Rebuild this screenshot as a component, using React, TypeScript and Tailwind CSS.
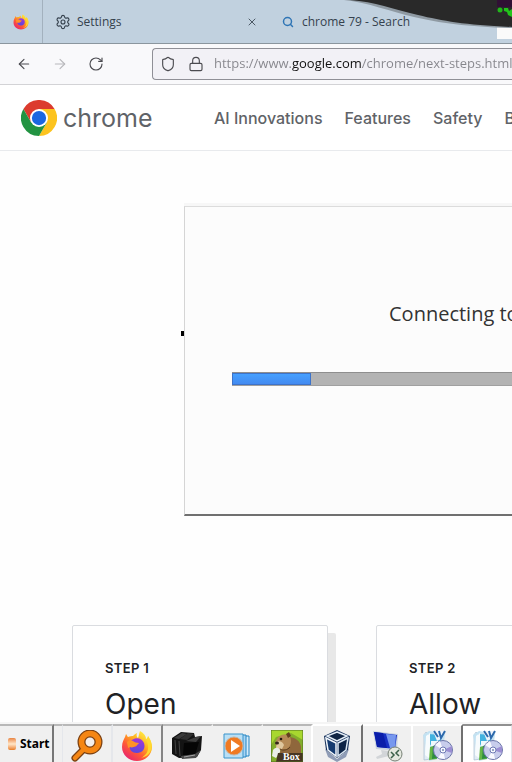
import type { ReactNode } from "react";
import { ArrowLeft, ArrowRight, Lock, RotateCw, Search, Settings, Shield, X } from "lucide-react";

const NAV_LINKS = ["AI Innovations", "Features", "Safety", "B"];

const STEPS = [
  { label: "STEP 1", title: "Open" },
  { label: "STEP 2", title: "Allow" },
];

function FirefoxIcon({ className }: { className: string }) {
  return (
    <svg viewBox="0 0 32 32" className={className} aria-hidden="true">
      <defs>
        <linearGradient id="fox" x1="0.85" y1="0.1" x2="0.2" y2="0.95">
          <stop offset="0" stopColor="#fff14a" />
          <stop offset="0.35" stopColor="#ffb01f" />
          <stop offset="0.65" stopColor="#ff5a36" />
          <stop offset="1" stopColor="#e8256f" />
        </linearGradient>
        <linearGradient id="globe" x1="0.6" y1="0" x2="0.4" y2="1">
          <stop offset="0" stopColor="#a436d8" />
          <stop offset="1" stopColor="#5948dd" />
        </linearGradient>
      </defs>
      <path
        d="M19 1c4 2 6 5 6 8 1 0 2-2 2-3 3 4 4 8 4 11 0 8-7 14-15 14S1 25 1 17c0-5 2-8 3-10l1-3c1 1 1 2 2 3 2-1 4-1 5-1 1-1 2-2 4-3-1 3 0 4 1 5 1-2 1-5 2-7Z"
        fill="url(#fox)"
      />
      <path d="M20 3c4 3 6 7 7 12 1 7-3 11-7 13 9-2 12-9 10-16-1-3-2-4-3-6 0 1-1 3-2 3-1-3-3-5-5-6Z" fill="#ffd92f" />
      <path d="M11 10c4-3 10-2 12 3 2 6-2 10-7 10s-8-3-7-7l3 1c2 0 4-1 4-2 0 0-3-1-3-2-1-1-2-1-4-1Z" fill="url(#globe)" />
      <path d="M6 12c2-2 4-2 6-1 1 1 4 2 6 2-1 2-3 2-4 3s-3 2-5 1l-2 1c0-2-1-4-1-6Z" fill="#ff9227" />
    </svg>
  );
}

function ChromeIcon({ className }: { className: string }) {
  return (
    <svg viewBox="0 0 48 48" className={className} aria-hidden="true">
      <circle cx="24" cy="24" r="24" fill="#fff" />
      <path d="M24 12h20.8A24 24 0 0 0 3.2 12l10.4 18Z" fill="#dc3b2e" />
      <path d="M34.4 30 24 48A24 24 0 0 0 44.8 12H24Z" fill="#fcc31e" />
      <path d="M13.6 30 3.2 12A24 24 0 0 0 24 48l10.4-18Z" fill="#229342" />
      <circle cx="24" cy="24" r="12" fill="#fff" />
      <circle cx="24" cy="24" r="9.5" fill="#1a66e0" />
    </svg>
  );
}

function MagnifierIcon() {
  return (
    <svg viewBox="0 0 32 32" className="size-8" aria-hidden="true">
      <path d="M13 19 4 28" stroke="#7a4012" strokeWidth="7" strokeLinecap="round" />
      <circle cx="19" cy="12" r="8.5" fill="#f4efec" stroke="#7a4012" strokeWidth="8" />
      <path d="M13 19 4 28" stroke="#f58613" strokeWidth="4.5" strokeLinecap="round" />
      <circle cx="19" cy="12" r="8.5" fill="none" stroke="#f58613" strokeWidth="5.5" />
    </svg>
  );
}

function BlackBoxesIcon() {
  return (
    <svg viewBox="0 0 32 32" className="size-8" aria-hidden="true">
      <path d="m1 8 9-6 13 1 1 4 7-1-1 14-4 7-18 1-7-4Z" fill="#141414" />
      <path d="m3 8 8-5 5 1-8 5Z" fill="#3b3b3b" />
      <path d="m9 9 8-6 6 1-7 6Z" fill="#303030" />
      <path d="m15 11 10-4 5-1-5 6Z" fill="#3d3d3d" />
      <path d="m4 10 1 14M8 11l1 15" stroke="#444" />
      <path d="M13 13 12 25h12l4-13Z" fill="#050505" />
      <path d="m10 26 14-2 6-4-5 8-14 1Z" fill="#4b4b4b" />
      <path d="m13 27 11-2" stroke="#a5a5a5" />
    </svg>
  );
}

function PlayerIcon() {
  return (
    <svg viewBox="0 0 32 32" className="size-8" aria-hidden="true">
      <path d="M10 6h18v20H10Z" fill="#d5ecfb" stroke="#2585c2" />
      <path d="M7 5h18v22H7Z" fill="#a7d4f3" stroke="#2585c2" />
      <path d="M3 4h19v24H3Z" fill="#b9dff5" stroke="#3a94cb" />
      <circle cx="13" cy="16" r="9" fill="#f07a22" stroke="#c9b19d" />
      <path d="m10 10 9 6-9 6Z" fill="#fff" />
    </svg>
  );
}

function BeaverIcon() {
  return (
    <svg viewBox="0 0 32 32" className="size-8" aria-hidden="true">
      <rect width="32" height="32" fill="#83ad2b" />
      <path d="M0 0h32v10L20 3 5 7 0 15Z" fill="#a8d72f" />
      <path d="M13 8c7-3 16 1 17 9v9l-12 5-10-6Z" fill="#8f673c" />
      <path d="M6 9c3-5 9-6 13-2 2 4 1 9-3 12l-7 1c-4-2-6-7-3-11Z" fill="#b58a56" />
      <path d="M6 12c2-2 6 0 7 3l-2 4-6-1Z" fill="#dfc79e" />
      <circle cx="10" cy="9" r="1.3" fill="#231910" />
      <path d="m15 4 3-2 2 4-3 2Z" fill="#63401f" />
      <ellipse cx="6" cy="13" rx="2" ry="1.5" fill="#33251b" />
      <path d="M9 19c3 2 8 1 10-2" fill="none" stroke="#5e3f20" />
      <path d="M2 20c3-4 8-2 7 2l-4 6-4-2Z" fill="#e9ede7" />
      <path d="M7 23h25v9H5Z" fill="#463522" />
      <path d="M0 0h32v32H0Z" fill="none" stroke="#506f22" />
      <text x="12" y="30" fill="#fff" fontFamily="Liberation Serif, serif" fontWeight="700" fontSize="10">
        Box
      </text>
    </svg>
  );
}

function CubeIcon() {
  return (
    <svg viewBox="0 0 32 32" className="size-8" aria-hidden="true">
      <path d="m4 19 12 10 12-10-3 8-9 5-9-5Z" fill="#8f9cb6" />
      <path d="m16 0 13 6-2 14-11 8L5 20 3 6Z" fill="#19335c" />
      <path d="m16 2 10 4-10 5L6 6Z" fill="#102544" stroke="#e6eff8" strokeWidth="1.5" />
      <path d="m5 8 10 5v13l-8-6Z" fill="#153b70" stroke="#f1f6fb" strokeWidth="1.5" />
      <path d="m27 8-10 5v13l8-6Z" fill="#0d2446" stroke="#dce8f3" strokeWidth="1.5" />
    </svg>
  );
}

function RemoteDesktopIcon() {
  return (
    <svg viewBox="0 0 32 32" className="size-8" aria-hidden="true">
      <path d="m10 20 8 1v5l-12 3-1-2 6-3Z" fill="#d2d5d8" />
      <path d="m2 1 25 3-1 17L5 19Z" fill="#c9d3df" />
      <path d="m3 2 23 3-2 14L6 17Z" fill="#1731c4" />
      <path d="m15 4 10 1-1 14-5-1Z" fill="#7798ee" />
      <path d="m3 2 9 1 4 15-10-1Z" fill="#0a1eaa" />
      <circle cx="24" cy="24" r="7" fill="#e4e8df" stroke="#768075" />
      <path d="m20 22 3 3-3 3m8-8-3 3 3 3" fill="none" stroke="#3b5f48" strokeWidth="1.5" />
    </svg>
  );
}

function InstallerIcon() {
  return (
    <svg viewBox="0 0 32 32" className="size-8" aria-hidden="true">
      <path d="m5 2 4 4 1 23-7 1V5Z" fill="#e2edf5" stroke="#9ab5ca" strokeWidth="0.6" />
      <path d="m2 5 6-4 16 3-3 24-13 3Z" fill="#c3e2f2" />
      <path d="m7 4 14 1-2 9-12 1Z" fill="#43b2df" />
      <path d="m5 6 4-3v26l-5-4Z" fill="#f7fbfd" />
      <path d="M10 11h10v5H10Z" fill="#eff9fc" />
      <path d="m9 17 7-2v14l-8 1Z" fill="#65b646" />
      <path d="m12 16 4-1v13l-5 1Z" fill="#2e8d3f" />
      <path d="M12 1h11l-3 8-4 2-2-5Z" fill="#eef4fb" />
      <path d="m13 1 4 6m1-6 2 7 4-7" fill="none" stroke="#2c69ac" strokeWidth="2" />
      <circle cx="22" cy="20" r="9.5" fill="#c8cdec" stroke="#6c76a8" />
      <path d="M22 20 14 15l5-4Z" fill="#f9f8ff" />
      <path d="m22 20 9-4v7Z" fill="#9b8ed2" />
      <path d="m22 20-5 8 7 1Z" fill="#fafaff" />
      <circle cx="22" cy="20" r="3" fill="#f8faff" stroke="#6e7ab4" />
      <circle cx="22" cy="20" r="1" fill="#7988b5" />
    </svg>
  );
}

type Task = { name: string; icon: ReactNode; edge: string };

const TASKS: Task[] = [
  { name: "Search Everything", icon: <MagnifierIcon />, edge: "border-r-gray-200 border-t-[#b8b8b8]" },
  { name: "Firefox", icon: <FirefoxIcon className="size-8" />, edge: "border-r-[#858585] border-t-[#b8b8b8]" },
  { name: "Boxes", icon: <BlackBoxesIcon />, edge: "border-r-[#f0f0f0] border-t-[#b8b8b8]" },
  { name: "Media Player", icon: <PlayerIcon />, edge: "border-r-[#f0f0f0] border-t-[#b8b8b8]" },
  { name: "Beaver Box", icon: <BeaverIcon />, edge: "border-r-white border-t-[#b8b8b8]" },
  { name: "VirtualBox", icon: <CubeIcon />, edge: "border-r-[#707070] border-t-white" },
  { name: "Remote Desktop", icon: <RemoteDesktopIcon />, edge: "border-r-white border-t-white" },
  { name: "Installer", icon: <InstallerIcon />, edge: "border-r-[#707070] border-t-white" },
  { name: "Setup", icon: <InstallerIcon />, edge: "border-r-gray-200 border-t-[#909090] bg-white" },
];

function TabBar() {
  return (
    <div className="relative flex h-11 shrink-0 border-b border-[#8b969e] bg-[#c1d1df] text-xs text-[#35414d]">
      <button type="button" aria-label="Firefox" className="flex w-[43px] shrink-0 items-center justify-center border-r border-[#a3b1be]">
        <FirefoxIcon className="size-4" />
      </button>
      <div className="flex w-[227px] shrink-0 items-center justify-between px-3">
        <button type="button" className="flex items-center gap-1.5">
          <Settings className="size-4" strokeWidth={1.7} />
          Settings
        </button>
        <button type="button" aria-label="Close Settings">
          <X className="size-3" strokeWidth={1.7} />
        </button>
      </div>
      <button type="button" className="flex shrink-0 items-center gap-2 pl-3">
        <Search className="size-3 text-[#2f75b5]" strokeWidth={3} />
        chrome 79 - Search
      </button>

      {/* Dark window hanging over the tabs */}
      <svg viewBox="0 0 168 44" className="absolute top-0 right-0 h-11 w-[168px]" aria-hidden="true">
        <path d="M153 26h15v13h-15Z" fill="#fafafa" />
        <path d="M0 0c25 3 45 11 70 17s55 10 98 11V0Z" fill="#8f9aa3" />
        <path d="M6 0c25 2 43 9 68 15s48 10 94 12V0Z" fill="#292929" />
        <path d="M153 0h15v7h-15Z" fill="#301034" />
        <circle cx="156" cy="10" r="2.5" fill="#22b51b" />
        <path d="M160 8h4l1 3 3-2v8l-4-2-1-3-3-1Z" fill="#22c51b" />
      </svg>
    </div>
  );
}

function Toolbar() {
  return (
    <div className="flex h-[41px] shrink-0 items-center border-b border-[#d3d3d6] bg-[#f9f9fb] pl-4 text-[#4b4b50]">
      <div className="flex w-[136px] shrink-0 items-center gap-5">
        <button type="button" aria-label="Back">
          <ArrowLeft className="size-4" strokeWidth={1.7} />
        </button>
        <button type="button" aria-label="Forward" disabled className="text-[#b8b8bb]">
          <ArrowRight className="size-4" strokeWidth={1.7} />
        </button>
        <button type="button" aria-label="Reload">
          <RotateCw className="size-4" strokeWidth={1.7} />
        </button>
      </div>
      <div className="flex h-8 min-w-0 flex-1 items-center gap-3 rounded-l border border-r-0 border-[#8f8f96] bg-[#f2f1f6] pl-[7px]">
        <Shield className="size-4 shrink-0" strokeWidth={1.7} />
        <Lock className="-mr-0.5 size-4 shrink-0" strokeWidth={1.7} />
        <input
          type="text"
          aria-label="Address"
          defaultValue="https://www.google.com/chrome/next-steps.html"
          className="min-w-0 flex-1 bg-[linear-gradient(90deg,#85858b_77px,#111_77px,#111_148px,#85858b_148px)] bg-clip-text text-[13px] text-transparent outline-none"
        />
      </div>
    </div>
  );
}

function SiteHeader() {
  return (
    <header className="flex h-[66px] shrink-0 items-center border-b border-[#e8eaed] pl-[21px] font-['Inter',sans-serif] text-[#5f6368]">
      <a href="#home" className="flex w-[193px] shrink-0 items-center gap-1.5">
        <ChromeIcon className="size-9" />
        <span className="text-[25px] leading-8">chrome</span>
      </a>
      <nav className="flex gap-[22px] text-base font-medium whitespace-nowrap" aria-label="Main navigation">
        {NAV_LINKS.map((link) => (
          <a key={link} href="#nav">
            {link}
          </a>
        ))}
      </nav>
    </header>
  );
}

function ConnectingDialog() {
  return (
    <div
      role="dialog"
      aria-label="Connecting"
      className="absolute top-[55px] right-0 left-[184px] flex h-[310px] flex-col justify-center gap-11 border-t border-b-2 border-l border-t-[#dcdcdc] border-b-[#707070] border-l-[#d5d5d5] bg-[#fcfcfc] pb-9 pl-[47px] shadow-[0_-3px_0_#f7f7f7]"
    >
      <p className="pl-[157px] text-xl whitespace-nowrap text-[#333]">Connecting to</p>
      <div
        role="progressbar"
        aria-label="Connection progress"
        aria-valuenow={14}
        className="h-[14px] border-t border-b border-t-[#8e8e8e] border-b-[#a0a0a0] bg-[#b3b3b3]"
      >
        <div className="h-full w-[79px] border border-[#3d73c9] bg-linear-to-b from-[#45a0ff] to-[#438af0]" />
      </div>
    </div>
  );
}

function Taskbar() {
  return (
    <footer className="relative flex h-10 shrink-0 overflow-hidden border-t-2 border-[#f5f5f5] bg-[#f0f0f0]">
      <button
        type="button"
        className="flex w-[54px] shrink-0 items-center gap-1 border-t-2 border-r-2 border-t-[#b8b8b8] border-r-[#777] pl-2 font-['Noto_Sans',sans-serif] text-xs font-bold text-black"
      >
        <span className="h-3 w-2 shrink-0 rounded-xs bg-linear-to-b from-[#e8843f] via-[#ffe6c7] to-[#e77d1d]" />
        Start
      </button>
      <div className="w-[9px] shrink-0 border-t-2 border-r border-t-[#b8b8b8] border-r-gray-200" />
      {TASKS.map((task) => (
        <button
          key={task.name}
          type="button"
          aria-label={task.name}
          className={`flex w-[50px] shrink-0 items-start justify-center border-t-2 border-r-2 pt-1 ${task.edge}`}
        >
          {task.icon}
        </button>
      ))}
    </footer>
  );
}

export default function App() {
  return (
    <div className="flex h-screen flex-col overflow-hidden bg-white font-['Open_Sans',sans-serif]">
      <TabBar />
      <Toolbar />
      <SiteHeader />
      <main className="relative min-h-0 flex-1 overflow-hidden bg-[#fefefe]">
        {/* End of the headline that the dialog covers */}
        <div className="h-[474px] pt-[180px] pl-[181px]">
          <span className="block h-[5px] w-1 bg-black" />
        </div>
        <div className="flex gap-12 pl-[72px]">
          {STEPS.map((step) => (
            <section
              key={step.label}
              className="h-[300px] w-64 shrink-0 rounded-xs border border-[#dadce0] bg-white px-8 pt-8 font-['Inter',sans-serif] text-[#202124] shadow-[8px_8px_0_#e8e8e8]"
            >
              <p className="text-[13px] leading-5 font-semibold tracking-wide">{step.label}</p>
              <h2 className="mt-2 text-[28px] leading-9">{step.title}</h2>
            </section>
          ))}
        </div>
        <ConnectingDialog />
      </main>
      <Taskbar />
    </div>
  );
}
